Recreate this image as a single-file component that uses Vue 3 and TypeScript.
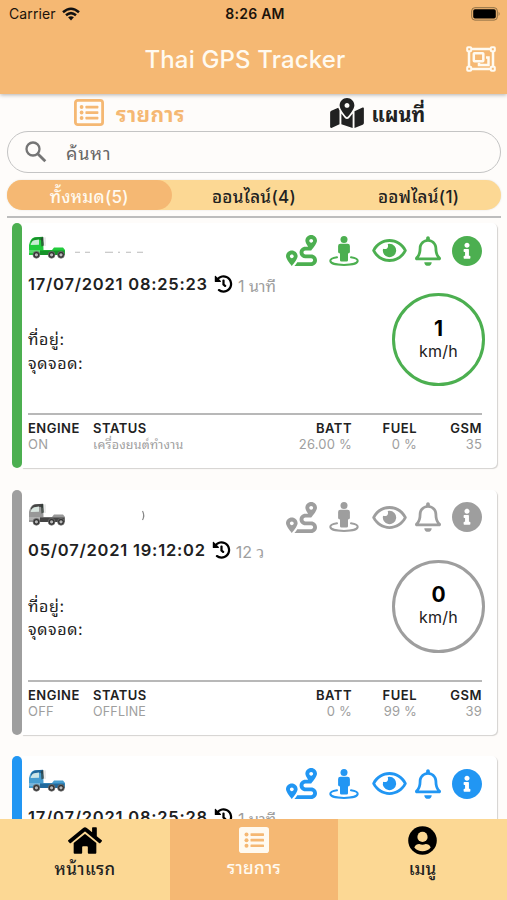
<script setup lang="ts">
interface Readings {
  speed: number
  engine: string
  status: string
  batt: string
  fuel: string
  gsm: string
}

interface Vehicle {
  tone: string
  time: string
  ago: string
  readings?: Readings
}

const vehicles: Vehicle[] = [
  { tone: 'green', time: '17/07/2021 08:25:23', ago: '1 นาที', readings: { speed: 1, engine: 'ON', status: 'เครื่องยนต์ทำงาน', batt: '26.00 %', fuel: '0 %', gsm: '35' } },
  { tone: 'gray', time: '05/07/2021 19:12:02', ago: '12 ว', readings: { speed: 0, engine: 'OFF', status: 'OFFLINE', batt: '0 %', fuel: '99 %', gsm: '39' } },
  { tone: 'blue', time: '17/07/2021 08:25:28', ago: '1 นาที' },
]
</script>

<template>
  <div class="screen">
    <header class="header">
      <div class="statusbar">
        <div class="carrier">
          <span class="carrier-name">Carrier</span>
          <svg class="wifi" viewBox="0 0 18 14">
            <g fill="none" stroke="#111" stroke-width="2.5">
              <path d="M1 5.2Q9-1.8 17 5.2" />
              <path d="M4 8.3Q9 4 14 8.3" />
            </g>
            <path d="M6.1 10.3Q9 8 11.9 10.3L9 13.4Z" fill="#111" />
          </svg>
        </div>
        <span class="clock">8:26 AM</span>
        <svg class="battery" viewBox="0 0 30 14">
          <rect x=".7" y=".7" width="25.6" height="12.4" rx="3.2" fill="none" stroke="#8d6f45" />
          <rect x="2.2" y="2.2" width="22.6" height="9.4" rx="1.8" fill="#000" />
          <path d="M27.6 4.8Q29.6 6.9 27.6 9Z" fill="#8d6f45" />
        </svg>
      </div>
      <div class="titlebar">
        <h1>Thai GPS Tracker</h1>
        <svg class="group" viewBox="0 0 30 26">
          <g fill="none" stroke="#fffaf0" stroke-width="2.5">
            <path d="M5 3H25M5 23H25M3 5V21M27 5V21" />
            <rect x="7.8" y="7.2" width="9.5" height="8" rx=".6" />
            <path d="M20 11.5H22.5V19H13V16.8" />
          </g>
          <g fill="#f5b873" stroke="#fffaf0" stroke-width="2">
            <rect x="1.2" y="1.2" width="4" height="4" rx=".8" />
            <rect x="24.8" y="1.2" width="4" height="4" rx=".8" />
            <rect x="1.2" y="20.8" width="4" height="4" rx=".8" />
            <rect x="24.8" y="20.8" width="4" height="4" rx=".8" />
          </g>
        </svg>
      </div>
    </header>

    <div class="views">
      <div class="view active">
        <svg class="list-icon" viewBox="0 0 30 27">
          <rect x="1.4" y="1.4" width="27.2" height="24.2" rx="2.4" fill="none" stroke="currentColor" stroke-width="2.8" />
          <g fill="currentColor">
            <circle cx="7.6" cy="8" r="1.9" /><circle cx="7.6" cy="13.5" r="1.9" /><circle cx="7.6" cy="19" r="1.9" />
            <rect x="11.4" y="6.7" width="13" height="2.7" rx=".7" /><rect x="11.4" y="12.2" width="13" height="2.7" rx=".7" /><rect x="11.4" y="17.7" width="13" height="2.7" rx=".7" />
          </g>
        </svg>
        <span class="view-label">รายการ</span>
      </div>
      <div class="view">
        <svg class="map-icon" viewBox="0 0 576 512"><path fill="currentColor" d="M288 0c-69.59 0-126 56.41-126 126 0 56.26 82.35 158.8 113.9 196.02 6.39 7.54 17.82 7.54 24.2 0C331.65 284.8 414 182.26 414 126 414 56.41 357.59 0 288 0zm0 168c-23.2 0-42-18.8-42-42s18.8-42 42-42 42 18.8 42 42-18.8 42-42 42zM20.12 215.95A32.006 32.006 0 0 0 0 245.66v250.32c0 11.32 11.43 19.06 21.94 14.86L160 448V214.92c-8.84-15.98-16.07-31.54-21.25-46.42L20.12 215.95zM288 359.67c-14.07 0-27.38-6.18-36.51-16.96-19.66-23.2-40.57-49.62-59.49-76.72v182l192 64V266c-18.92 27.09-39.82 53.52-59.49 76.72-9.13 10.77-22.44 16.95-36.51 16.95zm266.06-198.51L416 224v288l139.88-55.95A31.996 31.996 0 0 0 576 426.34V176.02c0-11.32-11.43-19.06-21.94-14.86z" /></svg>
        <span class="view-label">แผนที่</span>
      </div>
    </div>

    <div class="search">
      <svg viewBox="0 0 22 22"><circle cx="8" cy="8" r="6.5" fill="none" stroke="#757575" stroke-width="2.3" /><path d="M12.7 12.7L20.3 20.3" stroke="#757575" stroke-width="2.8" /></svg>
      <span>ค้นหา</span>
    </div>

    <div class="segments">
      <div class="segment selected">ทั้งหมด(5)</div>
      <div class="segment">ออนไลน์(4)</div>
      <div class="segment">ออฟไลน์(1)</div>
    </div>

    <main class="list">
      <article v-for="v in vehicles" :key="v.time" class="card" :class="v.tone">
        <div class="stripe"></div>
        <div class="body">
          <div class="top">
            <svg class="truck" viewBox="0 0 38 23">
              <path class="truck-body" d="M1 19V9Q2.5 2 6 1.4L14.5 1Q15.5 6 15.5 14H24L26 11.5H35L37 14V19Z" />
              <path class="truck-roof" d="M3 5Q5 1.4 8 1.2L15 .8V5Q9 1.8 3 7Z" />
              <path d="M2.6 9Q3.6 5 6 4.2L11 3.6V8.8Z" fill="#e4f3ec" opacity=".85" />
              <path d="M12.8 2L15.5 1L16 9.5L13.4 10.4Z" fill="#29352f" opacity=".65" />
              <path d="M1 14H12V17H1Z" fill="#fff" opacity=".25" />
              <path class="truck-frame" d="M12 14.5H36.5V19H12Z" />
              <path d="M17 1.4V10" stroke="#ccc" stroke-width=".8" />
              <g fill="#333" stroke="#777" stroke-width=".7">
                <circle cx="8.4" cy="18.8" r="3.4" /><circle cx="23.6" cy="18.8" r="3.4" /><circle cx="33" cy="18.8" r="3.4" />
              </g>
              <g fill="#b8b8b8"><circle cx="8.4" cy="18.8" r="1.6" /><circle cx="23.6" cy="18.8" r="1.6" /><circle cx="33" cy="18.8" r="1.6" /></g>
            </svg>
            <svg class="plate" viewBox="0 0 84 20">
              <path v-if="v.tone === 'green'" d="M9 13.2H14M19 13.2H24M39 13.2H47M52 13.2H54M60 13.2H65M71 13.2H77" stroke="#bbb" stroke-width="1.1" />
              <path v-if="v.tone === 'gray'" d="M76.5 5Q79 9.5 76.5 14" fill="none" stroke="#888" stroke-width="1.2" />
            </svg>
            <div class="actions">
              <svg class="a-route" viewBox="0 0 512 512"><path d="M416 320h-96c-17.6 0-32-14.4-32-32s14.4-32 32-32h96s96-107 96-160-43-96-96-96-96 43-96 96c0 25.5 22.2 63.4 45.3 96H320c-52.9 0-96 43.1-96 96s43.1 96 96 96h96c17.6 0 32 14.4 32 32s-14.4 32-32 32H185.5c-16 24.8-33.8 47.7-47.3 64H416c52.9 0 96-43.1 96-96s-43.1-96-96-96zm0-256c17.7 0 32 14.3 32 32s-14.3 32-32 32-32-14.3-32-32 14.3-32 32-32zM96 256c-53 0-96 43-96 96s96 160 96 160 96-107 96-160-43-96-96-96zm0 128c-17.7 0-32-14.3-32-32s14.3-32 32-32 32 14.3 32 32-14.3 32-32 32z" /></svg>
              <svg class="a-street" viewBox="0 0 30 30">
                <path d="M8 21.3Q1.3 22.4 1.3 24.7C1.3 27.2 7 28.9 15 28.9S28.7 27.2 28.7 24.7Q28.7 22.4 22 21.3" fill="none" stroke="currentColor" stroke-width="2" stroke-linecap="round" />
                <circle cx="15" cy="3.5" r="3.5" />
                <path d="M11.4 7.8H18.6Q20.9 7.8 20.9 10V16Q20.9 17.3 19 17.6V24.2Q19 25.6 17.6 25.6H12.4Q11 25.6 11 24.2V17.6Q9.1 17.3 9.1 16V10Q9.1 7.8 11.4 7.8Z" />
              </svg>
              <svg class="a-eye" viewBox="0 64 576 384"><path d="M288 144a110.94 110.94 0 0 0-31.24 5 55.4 55.4 0 0 1 7.24 27 56 56 0 0 1-56 56 55.4 55.4 0 0 1-27-7.24A111.71 111.71 0 1 0 288 144zm284.52 97.4C518.29 135.59 410.93 64 288 64S57.68 135.64 3.48 241.41a32.35 32.35 0 0 0 0 29.19C57.71 376.41 165.07 448 288 448s230.32-71.64 284.52-177.41a32.35 32.35 0 0 0 0-29.19zM288 400c-98.65 0-189.09-55-237.93-144C98.91 167 189.34 112 288 112s189.09 55 237.93 144C477.1 345 386.66 400 288 400z" /></svg>
              <svg class="a-bell" viewBox="0 0 448 512"><path d="M439.39 362.29c-19.32-20.76-55.47-51.99-55.47-154.29 0-77.7-54.48-139.9-127.94-155.16V32c0-17.67-14.32-32-31.98-32s-31.98 14.33-31.98 32v20.84C118.56 68.1 64.08 130.3 64.08 208c0 102.3-36.15 133.53-55.47 154.29-6 6.45-8.66 14.16-8.61 21.71.11 16.4 12.98 32 32.1 32h383.8c19.12 0 32-15.6 32.1-32 .05-7.55-2.61-15.27-8.61-21.71zM67.53 368c21.22-27.97 44.42-74.33 44.53-159.42 0-.2-.06-.38-.06-.58 0-61.86 50.14-112 112-112s112 50.14 112 112c0 .2-.06.38-.06.58.11 85.1 23.31 131.46 44.53 159.42H67.53zM224 512c35.32 0 63.97-28.65 63.97-64H160.03c0 35.35 28.65 64 63.97 64z" /></svg>
              <svg class="a-info" viewBox="8 8 496 496"><path d="M256 8C119.043 8 8 119.083 8 256c0 136.997 111.043 248 248 248s248-111.003 248-248C504 119.083 392.957 8 256 8zm0 110c23.196 0 42 18.804 42 42s-18.804 42-42 42-42-18.804-42-42 18.804-42 42-42zm56 254c0 6.627-5.373 12-12 12h-88c-6.627 0-12-5.373-12-12v-24c0-6.627 5.373-12 12-12h12v-64h-12c-6.627 0-12-5.373-12-12v-24c0-6.627 5.373-12 12-12h64c6.627 0 12 5.373 12 12v100h12c6.627 0 12 5.373 12 12v24z" /></svg>
            </div>
          </div>
          <div class="when">
            <span class="time">{{ v.time }}</span>
            <svg class="history" viewBox="0 0 512 512"><path d="M504 255.531c.253 136.64-111.18 248.372-247.82 248.468-59.015.042-113.223-20.53-155.822-54.911-11.077-8.94-11.905-25.541-1.839-35.607l11.267-11.267c8.609-8.609 22.353-9.551 31.891-1.984C173.062 425.135 212.781 440 256 440c101.705 0 184-82.311 184-184 0-101.705-82.311-184-184-184-48.814 0-93.149 18.969-126.068 49.932l50.754 50.754c10.08 10.08 2.941 27.314-11.313 27.314H24c-8.837 0-16-7.163-16-16V38.627c0-14.254 17.234-21.393 27.314-11.314l49.372 49.372C129.209 34.136 189.552 8 256 8c136.81 0 247.747 110.78 248 247.531zm-180.912 78.784l9.823-12.63c8.138-10.463 6.253-25.542-4.21-33.679L288 256.349V152c0-13.255-10.745-24-24-24h-16c-13.255 0-24 10.745-24 24v135.651l65.409 50.874c10.463 8.137 25.541 6.253 33.679-4.21z" /></svg>
            <span class="ago">{{ v.ago }}</span>
          </div>
          <template v-if="v.readings">
            <div class="middle">
              <div class="places">
                <div>ที่อยู่:</div>
                <div>จุดจอด:</div>
              </div>
              <div class="speed">
                <b>{{ v.readings.speed }}</b>
                <span>km/h</span>
              </div>
            </div>
            <div class="stats">
              <div class="stat"><b>ENGINE</b><span>{{ v.readings.engine }}</span></div>
              <div class="stat status"><b>STATUS</b><span>{{ v.readings.status }}</span></div>
              <div class="stat right"><b>BATT</b><span>{{ v.readings.batt }}</span></div>
              <div class="stat right"><b>FUEL</b><span>{{ v.readings.fuel }}</span></div>
              <div class="stat right"><b>GSM</b><span>{{ v.readings.gsm }}</span></div>
            </div>
          </template>
        </div>
      </article>
    </main>

    <nav class="nav">
      <div class="nav-item">
        <svg class="home" viewBox="0 32 576 448"><path d="M280.37 148.26L96 300.11V464a16 16 0 0 0 16 16l112.06-.29a16 16 0 0 0 15.92-16V368a16 16 0 0 1 16-16h64a16 16 0 0 1 16 16v95.64a16 16 0 0 0 16 16.05L464 480a16 16 0 0 0 16-16V300L295.67 148.26a12.19 12.19 0 0 0-15.3 0zM571.6 251.47L488 182.56V44.05a12 12 0 0 0-12-12h-56a12 12 0 0 0-12 12v72.61L318.47 43a48 48 0 0 0-61 0L4.34 251.47a12 12 0 0 0-1.6 16.9l25.5 31A12 12 0 0 0 45.15 301l235.22-193.74a12.19 12.19 0 0 1 15.3 0L530.9 301a12 12 0 0 0 16.9-1.6l25.5-31a12 12 0 0 0-1.7-16.93z" /></svg>
        <span class="wide">หน้าแรก</span>
      </div>
      <div class="nav-item current">
        <svg class="nav-list" viewBox="0 0 30 26">
          <rect width="30" height="26" rx="2.8" fill="#fffaf0" />
          <g fill="#f5b873">
            <circle cx="7.5" cy="7.6" r="2" /><circle cx="7.5" cy="13.2" r="2" /><circle cx="7.5" cy="18.8" r="2" />
            <rect x="11.5" y="6.2" width="13.5" height="2.7" rx=".6" /><rect x="11.5" y="11.8" width="13.5" height="2.7" rx=".6" /><rect x="11.5" y="17.4" width="13.5" height="2.7" rx=".6" />
          </g>
        </svg>
        <span class="wide">รายการ</span>
      </div>
      <div class="nav-item">
        <svg class="user" viewBox="0 0 29 29">
          <circle cx="14.5" cy="14.5" r="14.3" />
          <circle cx="14.5" cy="10.9" r="5.1" fill="#fcd894" />
          <path d="M6.3 21.4Q8 18.1 11.2 18.1Q14.5 19.3 17.8 18.1Q21 18.1 22.7 21.4Q19.5 25.2 14.5 25.2T6.3 21.4Z" fill="#fcd894" />
        </svg>
        <span>เมนู</span>
      </div>
    </nav>
  </div>
</template>

<style>
body {
  margin: 0;
}
</style>

<style scoped>
.screen {
  width: 507px;
  height: 900px;
  display: flex;
  flex-direction: column;
  overflow: hidden;
  background: #fefcfa;
  color: #212121;
  font-family: Inter, "Noto Sans Thai Looped", Loma, Waree, Garuda, "Noto Sans", sans-serif;
  white-space: nowrap;
}
svg {
  display: block;
  flex: none;
}
.header {
  height: 94px;
  flex: none;
  background: #f5b873;
  box-shadow: 0 1px 4px rgba(0, 0, 0, 0.3);
}
.statusbar {
  height: 27px;
  display: grid;
  grid-template-columns: 1fr auto 1fr;
  align-items: center;
  padding: 0 6px 0 9px;
  color: #1b130b;
}
.carrier {
  display: flex;
  align-items: center;
  gap: 6px;
}
.carrier-name {
  font-size: 14px;
  letter-spacing: 0.1px;
}
.wifi {
  width: 18px;
  height: 14px;
}
.clock {
  font-size: 14px;
  font-weight: 600;
  letter-spacing: 0.25px;
}
.battery {
  width: 30px;
  height: 14px;
  justify-self: end;
}
.titlebar {
  height: 66px;
  display: grid;
  grid-template-columns: 1fr auto 1fr;
  align-items: center;
  padding: 0 11px 0 0;
}
.titlebar h1 {
  grid-column: 2;
  margin: 0 0 2px -6px;
  font-size: 24px;
  font-weight: 500;
  letter-spacing: 0.15px;
  color: #fffaf0;
}
.group {
  width: 30px;
  height: 26px;
  margin-bottom: 2px;
  justify-self: end;
}
.views {
  height: 37px;
  flex: none;
  display: grid;
  grid-template-columns: 1fr 1fr;
}
.view {
  display: flex;
  align-items: center;
  padding-left: 76px;
  gap: 8px;
  font-weight: 700;
  font-size: 20px;
}
.view.active {
  color: #f5b873;
  gap: 12px;
  padding-left: 74px;
}
.active .view-label {
  font-size: 21px;
  letter-spacing: 0.4px;
}
.list-icon {
  width: 30px;
  height: 27px;
}
.map-icon {
  width: 34px;
  height: 30px;
}
.search {
  flex: none;
  height: 40px;
  margin: 0 6px 0 7px;
  display: flex;
  align-items: center;
  gap: 19px;
  padding-left: 17px;
  border: 1.5px solid #c4c4c4;
  border-radius: 22px;
  color: #666;
  font-size: 18px;
  letter-spacing: 0.8px;
}
.search svg {
  width: 22px;
  height: 22px;
}
.segments {
  flex: none;
  height: 30px;
  margin: 7px 6px 0 7px;
  display: grid;
  grid-template-columns: 1fr 1fr 1fr;
  border-radius: 15px;
  background: #fcd894;
  box-shadow: 0 0 2px rgba(0, 0, 0, 0.12);
}
.segment {
  display: flex;
  align-items: center;
  justify-content: center;
  border-radius: 15px;
  font-size: 17px;
  font-weight: 500;
  letter-spacing: 0.3px;
}
.segment.selected {
  background: #f5b873;
  color: #fffaf0;
}
.list {
  flex: 1;
  min-height: 0;
  overflow: hidden;
  margin: 6px 6px 0 7px;
  padding: 5px 4px 0 5px;
  border-top: 2px solid #bdbdbd;
}
.card {
  height: 245px;
  margin-bottom: 21.5px;
  display: flex;
}
.stripe {
  width: 10px;
  flex: none;
  border-radius: 5px;
  background: var(--tone);
}
.body {
  flex: 1;
  padding: 12px 15px 0 6px;
  border-radius: 0 5px 5px 0;
  background: #fff;
  box-shadow: 1px 1px 1px rgba(0, 0, 0, 0.17);
}
.green {
  --tone: #4caf50;
  --body: #22cb3c;
  --dark: #169329;
}
.gray {
  --tone: #9e9e9e;
  --body: #989898;
  --dark: #454545;
}
.blue {
  --tone: #2196f3;
  --body: #469dd0;
  --dark: #20699c;
}
.top {
  height: 31px;
  display: flex;
  align-items: flex-start;
}
.truck {
  width: 38px;
  height: 23px;
  margin-top: 1px;
}
.truck-body {
  fill: var(--body);
}
.truck-roof,
.truck-frame {
  fill: var(--dark);
}
.plate {
  width: 84px;
  height: 20px;
  margin-top: 4px;
}
.actions {
  margin-left: auto;
  display: flex;
  align-items: center;
  height: 31px;
  color: var(--tone);
}
.actions svg {
  fill: currentColor;
}
.a-route {
  width: 31px;
  height: 31px;
}
.a-street {
  width: 30px;
  height: 30px;
  margin-left: 12px;
}
.a-eye {
  width: 35px;
  height: 23px;
  margin-left: 13px;
}
.a-bell {
  width: 26px;
  height: 30px;
  margin-left: 8px;
}
.a-info {
  width: 30px;
  height: 30px;
  margin-left: 11px;
}
.when {
  height: 36px;
  display: flex;
  align-items: center;
}
.time {
  margin-top: -1px;
  font-size: 16.5px;
  font-weight: 600;
  letter-spacing: 0.78px;
}
.history {
  width: 19px;
  height: 18px;
  margin: -1px 0 0 6px;
}
.ago {
  margin-left: 5px;
  padding-top: 3px;
  color: #9e9e9e;
  font-size: 16px;
  line-height: 20px;
}
.middle {
  height: 111px;
  display: flex;
  justify-content: space-between;
  align-items: flex-start;
}
.places {
  padding-top: 26px;
  font-size: 16px;
  line-height: 23.5px;
  letter-spacing: 0.6px;
}
.speed {
  width: 93px;
  height: 93px;
  box-sizing: border-box;
  margin: -9px -3px 0 0;
  border: 3.5px solid var(--tone);
  border-radius: 50%;
  display: flex;
  flex-direction: column;
  align-items: center;
  justify-content: center;
  line-height: 23px;
}
.speed b {
  color: #000;
  font-size: 21px;
  font-weight: 700;
}
.speed span {
  font-size: 16px;
  letter-spacing: 0.2px;
}
.stats {
  border-top: 2px solid #b8b8b8;
  padding-top: 5px;
  display: grid;
  grid-template-columns: 65px 1fr 80px 65px 65px;
}
.stat {
  display: flex;
  flex-direction: column;
  font-size: 13px;
  line-height: 17px;
}
.stat b {
  font-weight: 600;
  letter-spacing: 0.5px;
}
.stat span {
  color: #9e9e9e;
  height: 17px;
  margin-top: -1px;
  letter-spacing: 0.2px;
}
.status span {
  font-size: 12.5px;
}
.right {
  align-items: flex-end;
}
.nav {
  flex: none;
  height: 81px;
  display: grid;
  grid-template-columns: 170px 168px 1fr;
  background: #fcd894;
}
.nav-item {
  display: flex;
  flex-direction: column;
  align-items: center;
  padding-top: 7px;
  font-size: 17px;
  font-weight: 500;
  line-height: 24px;
}
.nav-item span {
  margin-top: 2px;
}
.nav-item .wide {
  letter-spacing: 0.4px;
}
.nav-item.current {
  background: #f5b873;
  color: #fffaf0;
}
.home {
  width: 34px;
  height: 29px;
}
.nav-list {
  width: 30px;
  height: 28px;
}
.user {
  width: 29px;
  height: 29px;
}
</style>
